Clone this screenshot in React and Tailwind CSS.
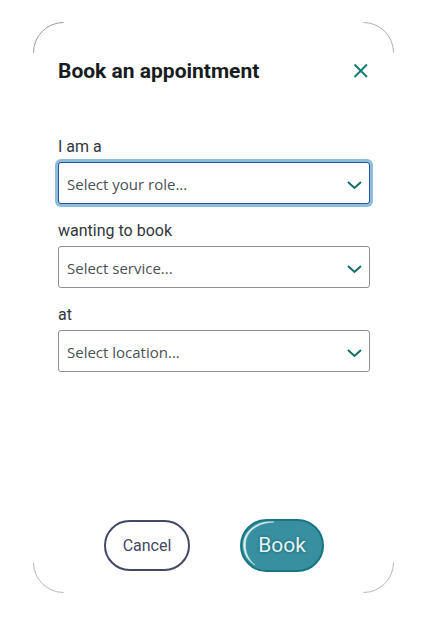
import clsx from "clsx";

const fields = [
  { id: "role", label: "I am a", placeholder: "Select your role...", active: true },
  { id: "service", label: "wanting to book", placeholder: "Select service..." },
  { id: "location", label: "at", placeholder: "Select location..." },
];

const CornerArc = ({ className }) => (
  <svg
    className={clsx("absolute h-8 w-8 pointer-events-none", className)}
    viewBox="0 0 32 32"
    fill="none"
    aria-hidden="true"
  >
    <path d="M0.5 30.5A30 30 0 0 1 30.5 0.5" stroke="currentColor" />
  </svg>
);

const SelectField = ({ id, label, placeholder, active }) => (
  <div>
    <label htmlFor={id} className="block mb-[3px] text-base leading-6 text-[#33373c]">
      {label}
    </label>
    <div className="relative">
      <select
        id={id}
        defaultValue=""
        className={clsx(
          "block w-full h-[42px] pt-[3px] pl-2 pr-8 appearance-none rounded-[3px] border bg-white font-['Open_Sans',sans-serif] text-[15px] font-[370] text-[#4a5056] outline-none",
          active ? "border-[#2453a0] ring-3 ring-[#8fbbdc]" : "border-[#8c9095]"
        )}
      >
        <option value="">{placeholder}</option>
      </select>
      <svg
        className="absolute right-2 top-4 w-4 h-4 pointer-events-none"
        viewBox="0 0 16 16"
        fill="none"
        aria-hidden="true"
      >
        <path d="M2 4L8.500 10L15 4" stroke="#0f6e65" strokeWidth="2" />
      </svg>
    </div>
  </div>
);

const App = () => {
  return (
    <div className="min-h-screen bg-white pl-[33px] pr-[30px] pt-[22px] font-[Roboto,sans-serif]">
      <form className="relative pl-[25px] pr-6 pt-[35px] pb-[21px]" onSubmit={(e) => e.preventDefault()}>
        <CornerArc className="left-0 top-0 text-[#9a9a9a]" />
        <CornerArc className="right-0 top-0 rotate-90 text-[#b0b0b0]" />
        <CornerArc className="right-0 bottom-0 rotate-180 text-[#b8b8b8]" />
        <CornerArc className="left-0 bottom-0 -rotate-90 text-[#b8b8b8]" />

        <div className="flex items-center justify-between">
          <h1 className="text-[21px] font-bold leading-7 text-[#171c21]">Book an appointment</h1>
          <button type="button" aria-label="Close" className="w-5 h-5 cursor-pointer">
            <svg viewBox="0 0 20 20" fill="none" aria-hidden="true">
              <path d="M4.500 3.500L17 16M17 3.500L4.500 16" stroke="#167c71" strokeWidth="2" />
            </svg>
          </button>
        </div>

        <div className="mt-[50px] flex flex-col gap-[15px]">
          {fields.map((field) => (
            <SelectField key={field.id} {...field} />
          ))}
        </div>

        <div className="mt-[147px] flex items-center justify-center gap-[50px]">
          <button
            type="button"
            className="w-[86px] h-[51px] rounded-full border-2 border-[#434865] bg-white text-base text-[#434865] cursor-pointer"
          >
            Cancel
          </button>
          <button
            type="submit"
            className="relative w-[84px] h-[53px] rounded-full border-2 border-[#187681] bg-[#378f9f] text-[21px] text-[#eaf3f4] text-shadow-[0_0_3px_#0f5b66] cursor-pointer"
          >
            <svg
              className="absolute left-0 top-0 w-10 h-12"
              viewBox="0 0 40 48"
              fill="none"
              aria-hidden="true"
            >
              <path
                d="M32 1C26 0.500 19 1 13 5C5 10 1 17 1.500 25C2 33 6 40 13 44C7 39 3.500 32 3.500 25C3 17 7 10 14 6C19 2.500 25 1.500 32 1Z"
                fill="#d9eef0"
                stroke="#d9eef0"
                strokeWidth="0.500"
              />
            </svg>
            Book
          </button>
        </div>
      </form>
    </div>
  );
};

export default App;
